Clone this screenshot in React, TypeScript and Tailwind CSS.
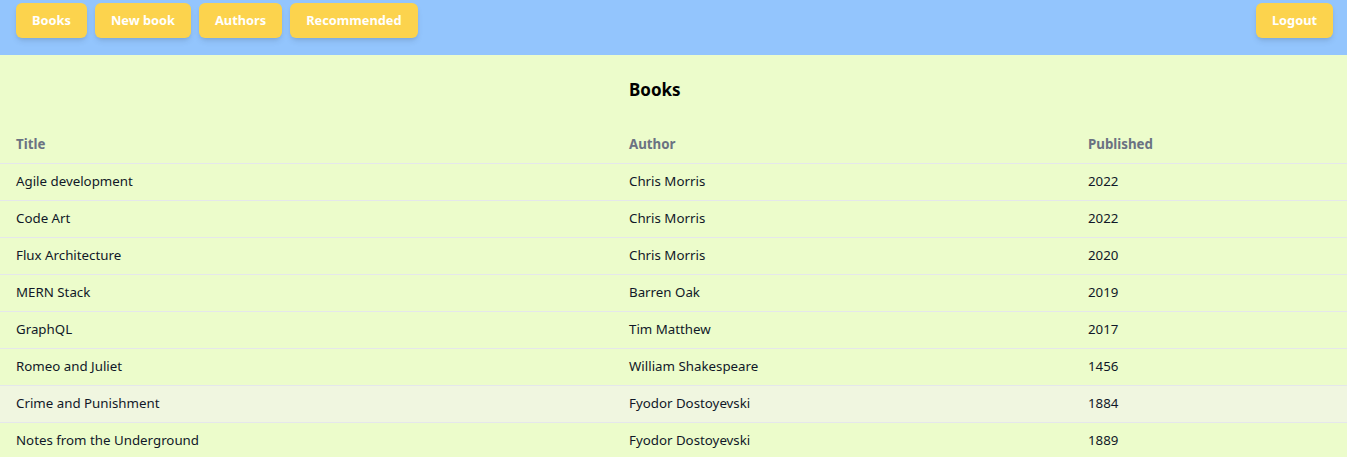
import React from "react";

type Book = { title: string; author: string; published: number };

const books: Book[] = [
  { title: "Agile development", author: "Chris Morris", published: 2022 },
  { title: "Code Art", author: "Chris Morris", published: 2022 },
  { title: "Flux Architecture", author: "Chris Morris", published: 2020 },
  { title: "MERN Stack", author: "Barren Oak", published: 2019 },
  { title: "GraphQL", author: "Tim Matthew", published: 2017 },
  { title: "Romeo and Juliet", author: "William Shakespeare", published: 1456 },
  { title: "Crime and Punishment", author: "Fyodor Dostoyevski", published: 1884 },
  { title: "Notes from the Underground", author: "Fyodor Dostoyevski", published: 1889 },
];

const NavButton: React.FC<{ label: string }> = ({ label }) => (
  <button className="bg-[#fcd34d] text-white font-bold text-[12.8px] px-4 h-[35px] rounded-md shadow-md">
    {label}
  </button>
);

const App: React.FC = () => {
  return (
    <div className="min-h-screen bg-[#ecfccb] font-['Noto_Sans',sans-serif] text-[13.3px] text-gray-900">
      {/* Navigation */}
      <nav className="bg-[#93c5fd] h-[55px] px-4 pt-[3px] flex justify-between items-start">
        <div className="flex gap-2">
          <NavButton label="Books" />
          <NavButton label="New book" />
          <NavButton label="Authors" />
          <NavButton label="Recommended" />
        </div>
        <div className="mr-[-2px]">
          <NavButton label="Logout" />
        </div>
      </nav>

      {/* Books table */}
      <section>
        <table className="w-full text-left border-collapse">
          <thead>
            <tr>
              <th></th>
              <th colSpan={2} className="px-4 pt-[22px] pb-[22px]">
                <h2 className="text-[17px] font-bold text-black leading-[26px]">Books</h2>
              </th>
            </tr>
            <tr className="border-b border-gray-200">
              <th className="w-[613px] px-4 h-[38px] pt-[2px] font-bold text-gray-500">Title</th>
              <th className="w-[459px] px-4 h-[38px] pt-[2px] font-bold text-gray-500">Author</th>
              <th className="px-4 h-[38px] pt-[2px] font-bold text-gray-500">Published</th>
            </tr>
          </thead>
          <tbody>
            {books.map((b) => (
              <tr
                key={b.title}
                className={
                  "border-b border-gray-200 " +
                  (b.title === "Crime and Punishment" ? "bg-[#f0f6e0]" : "")
                }
              >
                <td className="px-4 h-[37px]">{b.title}</td>
                <td className="px-4 h-[37px]">{b.author}</td>
                <td className="px-4 h-[37px]">{b.published}</td>
              </tr>
            ))}
          </tbody>
        </table>
      </section>
    </div>
  );
};

export default App;
